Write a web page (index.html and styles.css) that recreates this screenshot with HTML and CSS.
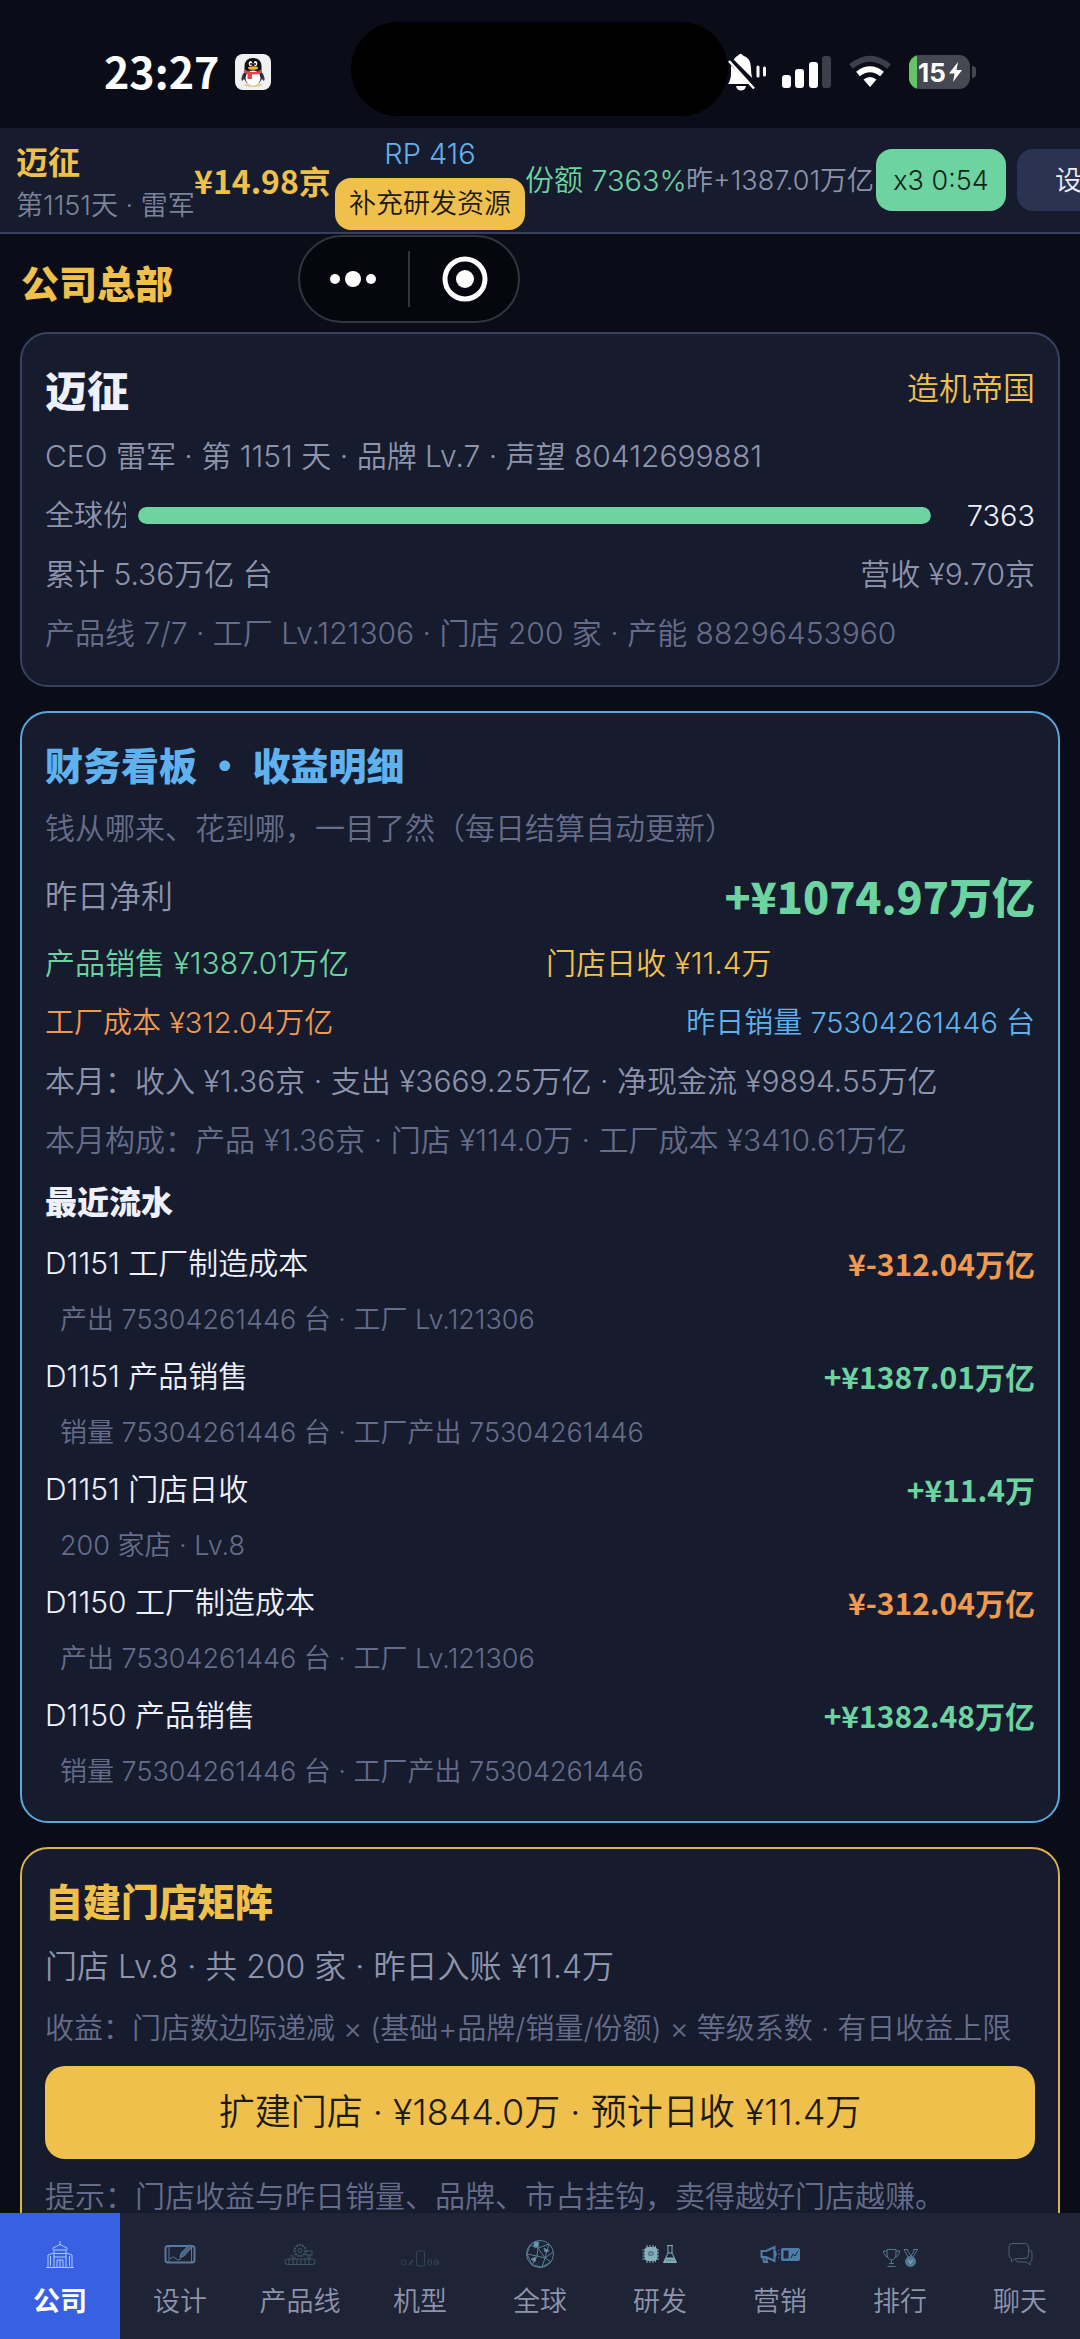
FILE: index.html
```html
<!DOCTYPE html>
<html lang="zh-CN">
<head>
    <meta charset="UTF-8">
    <meta name="viewport" content="width=device-width, initial-scale=1">
    <title>公司总部</title>
    <link rel="stylesheet" href="styles.css">
</head>
<body>
    <div class="status-bar">
        <div class="status-left">
            <span class="clock">23:27</span>
            <svg class="qq" viewBox="0 0 36 36">
                <rect width="36" height="36" rx="8" fill="#f1f1f3"/>
                <ellipse cx="18" cy="31" rx="9" ry="2" fill="#e5cf9c"/>
                <path d="M9.500 18 Q5 23 7 27 Q9 26 11 22 Z M26.500 18 Q31 23 29 27 Q27 26 25 22 Z" fill="#3a3c44"/>
                <ellipse cx="18" cy="22" rx="9.500" ry="9" fill="#26282f"/>
                <ellipse cx="18" cy="24" rx="7.500" ry="7.500" fill="#fff"/>
                <path d="M9.500 16 V12 Q10 4 18 4 Q26 4 26.500 12 V16 Z" fill="#111"/>
                <ellipse cx="15.500" cy="9.500" rx="1.800" ry="2.500" fill="#fff"/>
                <ellipse cx="20.500" cy="9.500" rx="1.800" ry="2.500" fill="#fff"/>
                <circle cx="16" cy="10" r="1" fill="#111"/>
                <circle cx="20" cy="10" r="1" fill="#111"/>
                <ellipse cx="18" cy="14" rx="5" ry="1.800" fill="#f5b02e"/>
                <path d="M9 16 Q18 20 27 16 V19 Q22 21 17 20.500 V25 H12.500 V20 L9 19 Z" fill="#e0444f"/>
            </svg>
        </div>
        <div class="island"></div>
        <div class="status-right">
            <svg class="bell" viewBox="0 0 40 38">
                <path d="M0 31 Q3 27 3 20 V13 Q6 4 10 2.500 Q12.500 -1 15 2.500 Q23 5 23 15 Q23 26 27 31 Z" fill="#fff"/>
                <path d="M8 33 H18 Q17 37.500 13 37.500 Q9 37.500 8 33 Z" fill="#fff"/>
                <path d="M1 6 L29 34" stroke="#0a0d18" stroke-width="6"/>
                <path d="M1 8 L26 35.500" stroke="#fff" stroke-width="2.500"/>
                <path d="M30 14 V23 M36.500 15 V22" stroke="#fff" stroke-width="3" stroke-linecap="round"/>
            </svg>
            <svg class="signal" viewBox="0 0 49 34">
                <rect x="0" y="20" width="9" height="13" rx="3" fill="#fff"/>
                <rect x="13" y="14" width="9" height="19" rx="3" fill="#fff"/>
                <rect x="27" y="7" width="9" height="26" rx="3" fill="#fff"/>
                <rect x="40" y="1" width="9" height="32" rx="3" fill="#3c3e49"/>
            </svg>
            <svg class="wifi" viewBox="0 0 44 34">
                <path d="M3 11.500 Q22 -4 41 11.500" fill="none" stroke="#3c3e49" stroke-width="6"/>
                <path d="M10 19 Q22 9.500 34 19" fill="none" stroke="#fff" stroke-width="6"/>
                <path d="M15.500 24.500 Q22 19.500 28.500 24.500 L22 32 Z" fill="#fff"/>
            </svg>
            <div class="battery">
                <div class="battery-body">
                    <span class="battery-level"></span>
                    <span class="battery-text">15</span>
                    <svg class="bolt" viewBox="0 0 13 20">
                        <path d="M9 0 L0 11.500 H5.500 L4 20 L13 8 H7.500 Z" fill="#fff"/>
                    </svg>
                </div>
                <span class="battery-cap"></span>
            </div>
        </div>
    </div>

    <header class="top-bar">
        <div class="company">
            <div class="company-name">迈征</div>
            <div class="company-day">第1151天 · 雷军</div>
        </div>
        <div class="cash">¥14.98京</div>
        <div class="research">
            <span class="blue">RP 416</span>
            <button class="refill">补充研发资源</button>
        </div>
        <div class="share green">份额 7363%</div>
        <div class="yesterday">昨+1387.01万亿</div>
        <button class="speed">x3 0:54</button>
        <button class="settings">设置</button>
    </header>

    <div class="capsule">
        <button class="capsule-btn" aria-label="更多">
            <svg viewBox="0 0 48 48"><circle cx="6" cy="24" r="5"/><circle cx="24" cy="24" r="8"/><circle cx="42" cy="24" r="5"/></svg>
        </button>
        <span class="capsule-line"></span>
        <button class="capsule-btn" aria-label="关闭">
            <svg viewBox="0 0 48 48"><circle class="ring" cx="24" cy="24" r="20"/><circle cx="24" cy="24" r="9"/></svg>
        </button>
    </div>

    <main>
        <h1>公司总部</h1>

        <section class="card">
            <div class="row head">
                <h2 class="name">迈征</h2>
                <span class="rank">造机帝国</span>
            </div>
            <p class="muted">CEO 雷军 · 第 1151 天 · 品牌 Lv.7 · 声望 80412699881</p>
            <div class="row share-row">
                <label for="share">全球份额</label>
                <progress id="share" value="100" max="100"></progress>
                <span class="share-value">7363</span>
            </div>
            <div class="row muted">
                <span>累计 5.36万亿 台</span>
                <span>营收 ¥9.70京</span>
            </div>
            <p class="dim">产品线 7/7 · 工厂 Lv.121306 · 门店 200 家 · 产能 88296453960</p>
        </section>

        <section class="card card-blue">
            <h2 class="blue">财务看板 · 收益明细</h2>
            <p class="dim">钱从哪来、花到哪，一目了然（每日结算自动更新）</p>
            <div class="row profit">
                <span class="profit-label">昨日净利</span>
                <span class="profit-value">+¥1074.97万亿</span>
            </div>
            <div class="row halves">
                <span class="green">产品销售 ¥1387.01万亿</span>
                <span class="gold">门店日收 ¥11.4万</span>
            </div>
            <div class="row costs">
                <span class="orange">工厂成本 ¥312.04万亿</span>
                <span class="blue">昨日销量 75304261446 台</span>
            </div>
            <p class="muted">本月：收入 ¥1.36京 · 支出 ¥3669.25万亿 · 净现金流 ¥9894.55万亿</p>
            <p class="dim">本月构成：产品 ¥1.36京 · 门店 ¥114.0万 · 工厂成本 ¥3410.61万亿</p>
            <h3>最近流水</h3>
            <div class="row"><span>D1151 工厂制造成本</span><b class="orange">¥-312.04万亿</b></div>
            <p class="note">产出 75304261446 台 · 工厂 Lv.121306</p>
            <div class="row"><span>D1151 产品销售</span><b class="green">+¥1387.01万亿</b></div>
            <p class="note">销量 75304261446 台 · 工厂产出 75304261446</p>
            <div class="row"><span>D1151 门店日收</span><b class="green">+¥11.4万</b></div>
            <p class="note">200 家店 · Lv.8</p>
            <div class="row"><span>D1150 工厂制造成本</span><b class="orange">¥-312.04万亿</b></div>
            <p class="note">产出 75304261446 台 · 工厂 Lv.121306</p>
            <div class="row"><span>D1150 产品销售</span><b class="green">+¥1382.48万亿</b></div>
            <p class="note">销量 75304261446 台 · 工厂产出 75304261446</p>
        </section>

        <section class="card card-gold">
            <h2 class="gold">自建门店矩阵</h2>
            <p class="stores">门店 Lv.8 · 共 200 家 · 昨日入账 ¥11.4万</p>
            <p class="dim formula">收益：门店数边际递减 × (基础+品牌/销量/份额) × 等级系数 · 有日收益上限</p>
            <button class="expand">扩建门店 · ¥1844.0万 · 预计日收 ¥11.4万</button>
            <p class="dim">提示：门店收益与昨日销量、品牌、市占挂钩，卖得越好门店越赚。</p>
        </section>
    </main>

    <nav class="tabs">
        <a class="tab active" href="#company">
            <svg viewBox="0 0 40 40" stroke="#a9cdf8">
                <path d="M20 7 V11 M13 16 V14 L20 10.500 L27 14 V16 M14 16 V33 M26 16 V33 M8 33 V21 L13.500 19 M32 33 V21 L26.500 19 M6 33.500 H34 M14 16 H26 M14 19.500 H26 M14 23 H26 M10.500 22 V32 M29.500 22 V32 M17 33 V26 H23 V33 M20 26 V33"/>
            </svg>
            公司
        </a>
        <a class="tab" href="#design">
            <svg viewBox="0 0 40 40" stroke="#56799f">
                <rect x="5.500" y="12" width="29" height="16.500" rx="2.500" stroke-width="2"/>
                <path d="M9 12 V28 M31.500 12 V28 M10 25 Q14 21 16 25 Q17 27 21 25"/>
                <path d="M20 24 L21 19 L29 11 L32 13 L24 22 Z" fill="#456787"/>
            </svg>
            设计
        </a>
        <a class="tab" href="#lines">
            <svg viewBox="0 0 40 40" stroke="#3e5665">
                <rect x="5" y="25" width="30" height="5.500" rx="2.500"/>
                <path d="M9 25 V30 M13 25 V30 M17 25 V30 M21 25 V30 M25 25 V30 M29 25 V30"/>
                <circle cx="20" cy="16.500" r="5.500" stroke-width="2" stroke-dasharray="2 1"/>
                <circle cx="20" cy="16.500" r="2"/>
                <path d="M26 17 H32 V21 H26 Z M28 21 V25 M30 21 V25 M12 24 H16 M10 22 H14"/>
            </svg>
            产品线
        </a>
        <a class="tab" href="#models">
            <svg viewBox="0 0 40 40" stroke="#34444f">
                <rect x="16.500" y="17" width="8" height="15" rx="1"/>
                <circle cx="3.500" cy="28.500" r="2.500"/>
                <path d="M9 31 L13 26" stroke-width="2"/>
                <rect x="28" y="26" width="3.500" height="5" rx="1"/>
                <circle cx="36.500" cy="28.500" r="2.500"/>
                <circle cx="36.500" cy="28.500" r="1"/>
            </svg>
            机型
        </a>
        <a class="tab" href="#global">
            <svg viewBox="0 0 40 40" stroke="#587f98">
                <circle cx="20" cy="20" r="13.500"/>
                <path d="M10 11 L18 14 L29 10 M18 14 L17 22 L7 20 M17 22 L25 24 L33 18 M25 24 L22 33 M17 22 L12 31 M29 10 L25 24 M18 14 L25 24 M10 11 L7 20 L12 31 L22 33 L31 28 L25 24"/>
                <path d="M14 8 L19 8 L18 13 L14 13 Z M24 14 L29 17 L25 18 Z M11 25 L16 23 L15 28 Z" fill="#6b9cb3"/>
            </svg>
            全球
        </a>
        <a class="tab" href="#research">
            <svg viewBox="0 0 40 40" stroke="#86aebb">
                <rect x="5" y="13.500" width="12" height="13" rx="3" fill="#86aebb"/>
                <path d="M7 11 V29 M10 11 V29 M13 11 V29 M15.500 12 V28 M2.500 16 H19 M2.500 19 H19 M2.500 22 H19 M2.500 25 H19"/>
                <path d="M9 22 V18 H13 V21 H10" stroke="#3e5d70"/>
                <path d="M27 11.500 H33 M28 12 V19 L23.500 28.500 H36.500 L32 19 V12 M28 19 H32 M26 24 H34"/>
                <path d="M26 24.500 H34 L36 28 H24 Z" fill="#6e95a3"/>
            </svg>
            研发
        </a>
        <a class="tab" href="#marketing">
            <svg viewBox="0 0 40 40" stroke="#4f7daa">
                <path d="M6 17 L14.500 13 V27 L6 23 H1.500 V17 Z M3 23 L4 28 H7 L6 23 M14.500 17 Q17 20 14.500 23" stroke-width="2"/>
                <path d="M18 17 L19 16 M18 20 H20 M18 23 L19 24"/>
                <rect x="21.500" y="14.500" width="18" height="12" rx="1" fill="#4f7daa"/>
                <rect x="24" y="17" width="4" height="7" fill="#1e2435" stroke="#1e2435"/>
                <path d="M31 24 L33 20 L35 22 L38 17" stroke="#1e2435"/>
            </svg>
            营销
        </a>
        <a class="tab" href="#ranking">
            <svg viewBox="0 0 40 40" stroke="#517892">
                <path d="M7 15.500 H16 V20 Q16 25 11.500 26 Q7 25 7 20 Z M7 17 H3.500 Q3.500 22 8 23 M16 17 H19.500 Q19.500 22 15 23 M11.500 26 V29 M9 29.500 H14 M7.500 32.500 H15.500"/>
                <path d="M24 15.500 L28 23 M37.500 15.500 L33 23 M27 15.500 L31 22 L34.500 15.500 M24 15.500 H28 M33 15.500 H38"/>
                <circle cx="30.500" cy="27.500" r="5" fill="#517892"/>
                <path d="M28.500 26 L30.500 29.500 L32.500 26" stroke="#8fb6cc"/>
            </svg>
            排行
        </a>
        <a class="tab" href="#chat">
            <svg viewBox="0 0 40 40" stroke="#486070">
                <path d="M12 9.500 H25 Q28.500 9.500 28.500 13 V21 Q28.500 24.500 25 24.500 H15 L11.500 28 V24.500 Q9 24 9 21 V13 Q9 9.500 12 9.500 Z"/>
                <path d="M28.500 16 Q32 16 32 19 V25 Q32 27 30 28 V31 L26.500 28 H18 Q16 28 15.500 25"/>
            </svg>
            聊天
        </a>
    </nav>
</body>
</html>
```
FILE: styles.css
```css
* {
    box-sizing: border-box;
}

body {
    margin: 0;
    height: 100vh;
    display: flex;
    flex-direction: column;
    overflow: hidden;
    background-color: #0a0d18;
    color: #eef0fa;
    font-family: Inter, "Noto Sans CJK SC", sans-serif;
    font-size: 30px;
    font-weight: 350;
    line-height: 43px;
}

h1, h2, h3, p {
    margin: 0;
}

h1, h2, h3, b {
    font-family: "Noto Sans CJK SC", sans-serif;
    font-weight: 700;
}

h1, h2, h3 {
    font-weight: 900;
}

button {
    border: none;
    padding: 0;
    font: inherit;
    white-space: nowrap;
    cursor: pointer;
}

.gold { color: #f0c04c; }
.green { color: #6dd3a0; }
.blue { color: #60b2ee; }
.orange { color: #f09a50; }
.muted { color: #8e94ac; }
.dim { color: #666d8a; }

/* phone status bar */
.status-bar {
    flex: none;
    height: 128px;
    padding-top: 16px;
    display: grid;
    grid-template-columns: 351px 1fr 352px;
    align-items: center;
}

.status-left {
    display: flex;
    align-items: center;
    gap: 16px;
    padding-left: 104px;
}

.clock {
    padding-bottom: 4px;
    font-family: "Noto Sans CJK SC", sans-serif;
    font-size: 43px;
    font-weight: 700;
    color: #fff;
}

.qq {
    width: 36px;
    height: 36px;
}

.island {
    height: 94px;
    margin-top: -6px;
    border-radius: 47px;
    background-color: #000;
}

.status-right {
    display: flex;
    align-items: center;
}

.bell {
    width: 40px;
    height: 38px;
}

.signal {
    width: 49px;
    height: 34px;
    margin-left: 14px;
}

.wifi {
    width: 44px;
    height: 34px;
    margin: 0 17px;
}

.battery {
    display: flex;
    align-items: center;
    gap: 2px;
}

.battery-body {
    width: 61px;
    height: 34px;
    display: flex;
    align-items: center;
    gap: 3px;
    overflow: hidden;
    border-radius: 11px;
    background-color: #454751;
}

.battery-level {
    width: 8px;
    height: 34px;
    background-color: #65c466;
}

.battery-text {
    font-size: 26px;
    font-weight: 700;
    color: #fff;
    margin-left: -2px;
}

.bolt {
    width: 13px;
    height: 20px;
}

.battery-cap {
    width: 4px;
    height: 12px;
    border-radius: 0 4px 4px 0;
    background-color: #454751;
}

/* resource bar */
.top-bar {
    flex: none;
    height: 106px;
    display: flex;
    align-items: center;
    padding-left: 16px;
    overflow: hidden;
    white-space: nowrap;
    font-size: 29px;
    background-color: #161c2e;
    border-bottom: 2px solid #36415c;
}

.top-bar > * {
    flex: none;
}

.company {
    width: 178px;
    display: flex;
    flex-direction: column;
    gap: 6px;
    padding-top: 6px;
    line-height: 40px;
}

.company-name {
    font-family: "Noto Sans CJK SC", sans-serif;
    font-size: 32px;
    font-weight: 700;
    color: #f0c04c;
}

.company-day {
    font-size: 27px;
    color: #7d8399;
}

.cash {
    width: 141px;
    font-family: "Noto Sans CJK SC", sans-serif;
    font-size: 32px;
    font-weight: 700;
    color: #f0c04c;
}

.research {
    width: 190px;
    display: flex;
    flex-direction: column;
    align-items: center;
    line-height: 48px;
}

.refill {
    width: 100%;
    height: 52px;
    border-radius: 16px;
    background-color: #f0c04c;
    color: #1c1a14;
    font-size: 27px;
}

.share {
    width: 161px;
}

.yesterday {
    width: 190px;
    font-size: 27px;
    color: #8e94ac;
}

.speed, .settings {
    width: 130px;
    height: 62px;
    border-radius: 16px;
    background-color: #6dd3a0;
    color: #0f241b;
    font-size: 27px;
}

.settings {
    margin-left: 11px;
    background-color: #2b3352;
    color: #eef0fa;
}

/* mini program buttons floating over the page */
.capsule {
    position: absolute;
    top: 235px;
    left: 298px;
    width: 222px;
    height: 88px;
    display: flex;
    align-items: center;
    justify-content: center;
    gap: 31px;
    border: 2px solid #35353d;
    border-radius: 44px;
    background-color: #06070e;
}

.capsule-btn {
    display: flex;
    background: none;
}

.capsule-btn svg {
    width: 48px;
    height: 48px;
    fill: #fff;
}

.capsule-btn .ring {
    fill: none;
    stroke: #fff;
    stroke-width: 5;
}

.capsule-line {
    width: 2px;
    height: 56px;
    background-color: #35353d;
}

/* page content */
main {
    flex: 1;
    min-height: 0;
    overflow: hidden;
    padding: 0 20px;
}

h1 {
    padding: 23px 0 25px 1px;
    font-size: 38px;
    line-height: 50px;
    color: #f0c04c;
}

.card {
    display: flex;
    flex-direction: column;
    gap: 16px;
    margin-bottom: 24px;
    padding: 28px 23px 30px;
    border: 2px solid #38415e;
    border-radius: 28px;
    background-color: #161c2e;
    white-space: nowrap;
}

.card-blue {
    border-color: #5aa7de;
}

.card-gold {
    border-color: #d9b14d;
}

.card h2 {
    padding-bottom: 4px;
    font-size: 38px;
    line-height: 46px;
}

.card h3 {
    padding-bottom: 4px;
    font-size: 32px;
    line-height: 44px;
}

.card .name {
    font-size: 42px;
    line-height: 53px;
}

.row {
    display: flex;
    align-items: center;
    justify-content: space-between;
}

.rank {
    padding-bottom: 4px;
    font-size: 32px;
    color: #f0c04c;
}

.share-row {
    gap: 12px;
}

.share-row label {
    width: 81px;
    overflow: hidden;
    color: #8e94ac;
}

.share-row progress {
    flex: 1;
    height: 17px;
    appearance: none;
    border: none;
    border-radius: 9px;
    overflow: hidden;
    background-color: #2b3352;
}

.share-row progress::-webkit-progress-bar {
    background-color: #2b3352;
}

.share-row progress::-webkit-progress-value {
    background-color: #6dd3a0;
    border-radius: 9px;
}

.share-row, .costs, .formula {
    font-size: 29px;
}

.share-value {
    width: 92px;
    text-align: right;
}

.profit {
    height: 60px;
}

.profit-label {
    font-size: 32px;
    color: #8e94ac;
}

.profit-value {
    padding-bottom: 2px;
    font-family: "Noto Sans CJK SC", sans-serif;
    font-size: 43px;
    font-weight: 900;
    color: #6dd3a0;
}

.halves {
    gap: 12px;
}

.halves > * {
    flex: 1;
}

.note {
    padding-left: 15px;
    font-size: 27px;
    line-height: 38px;
    color: #666d8a;
}

.stores {
    font-size: 32px;
    line-height: 48px;
    color: #8e94ac;
}

.expand {
    height: 93px;
    border-radius: 20px;
    background-color: #f0c04c;
    color: #1c1a14;
    font-size: 36px;
}

/* bottom tabs */
.tabs {
    flex: none;
    height: 126px;
    display: flex;
    background-color: #1e2435;
}

.tab {
    flex: 1;
    display: flex;
    flex-direction: column;
    align-items: center;
    gap: 8px;
    padding-top: 21px;
    color: #8e94ac;
    font-size: 27px;
    line-height: 40px;
    text-decoration: none;
}

.tab svg {
    width: 40px;
    height: 40px;
    fill: none;
}

.tab.active {
    background-color: #3860e2;
    color: #fff;
    font-weight: 700;
}
```
